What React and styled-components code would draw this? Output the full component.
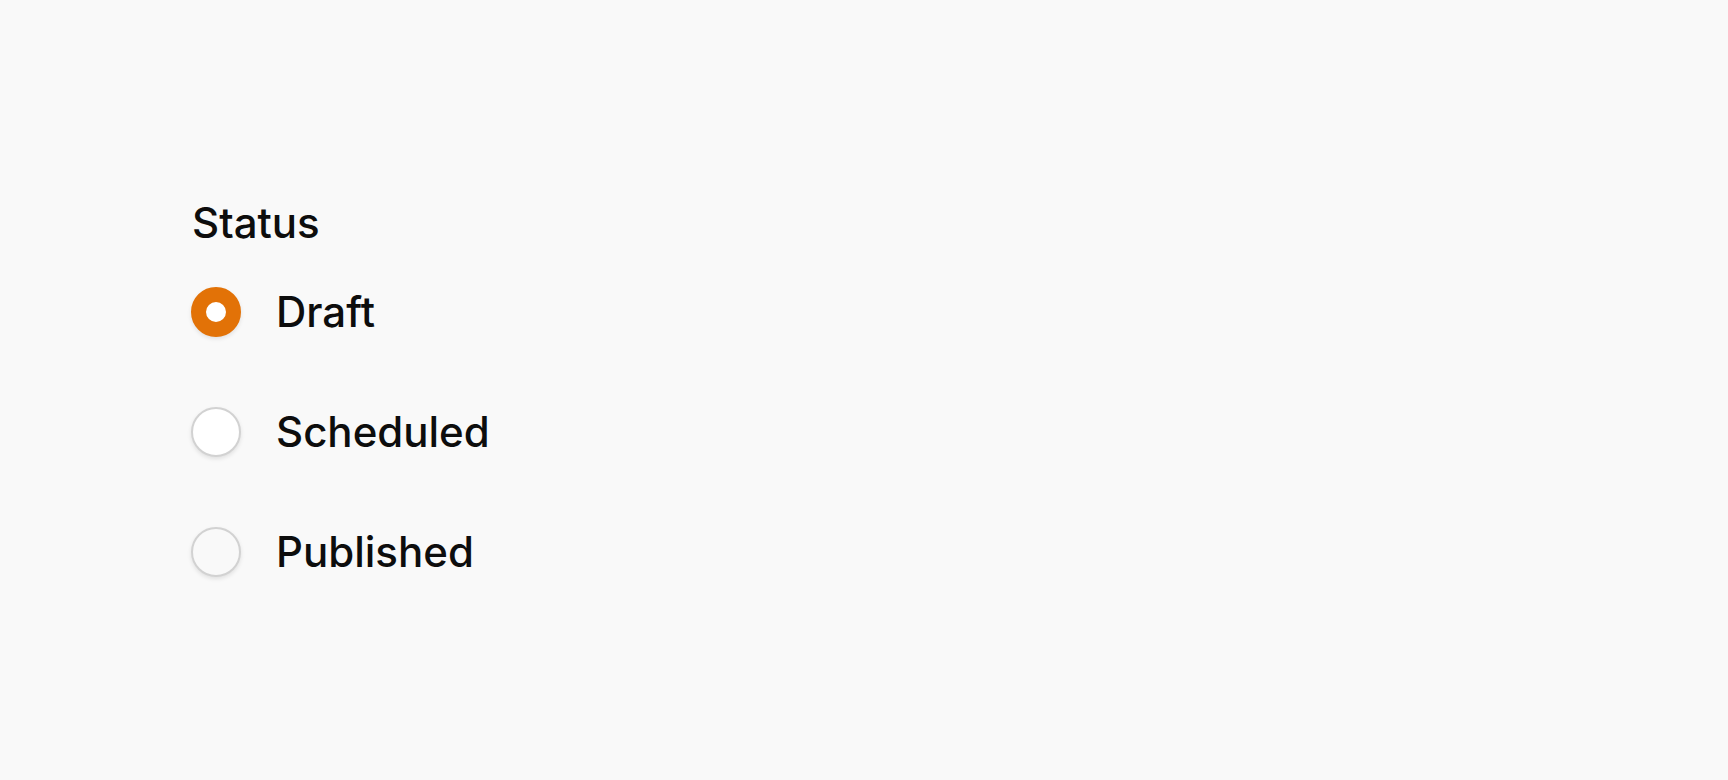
import React, {useState} from "react";
import styled, {createGlobalStyle} from "styled-components";

const OPTIONS = ["Draft", "Scheduled", "Published"];

function App() {
  const [status, setStatus] = useState("Draft");
  const [hovered, setHovered] = useState("Scheduled");

  return (
    <>
      <GlobalStyle/>
      <Page>
        <Group role="radiogroup" aria-label="Status">
          <Legend>Status</Legend>
          <List>
            {OPTIONS.map((option) => (
              <Option
                key={option}
                onClick={() => setStatus(option)}
                onMouseEnter={() => setHovered(option)}>
                <Radio
                  role="radio"
                  aria-checked={status === option}
                  $checked={status === option}
                  $hovered={hovered === option}/>
                <Label>{option}</Label>
              </Option>
            ))}
          </List>
        </Group>
      </Page>
    </>
  );
}

const GlobalStyle = createGlobalStyle`
    html, body {
        margin: 0;
        background: #f9f9f9;
    }
    body {
        font-family: Inter, "Noto Sans", sans-serif;
        color: #0d0d0d;
    }
`;
const Page = styled.div`
    min-height: 780px;
    padding: 197px 0 0 191px;
    box-sizing: border-box;
`;
const Group = styled.div`
    display: flex;
    flex-direction: column;
`;
const Legend = styled.div`
    font-size: 42px;
    line-height: 51px;
    font-weight: 500;
    margin: 0 0 38px 1px;
`;
const List = styled.div`
    display: flex;
    flex-direction: column;
    gap: 69px;
`;
const Option = styled.label`
    display: flex;
    align-items: center;
    gap: 35px;
    height: 51px;
    cursor: pointer;
`;
const Radio = styled.span`
    width: 50px;
    height: 50px;
    border-radius: 50%;
    box-sizing: border-box;
    flex-shrink: 0;
    background: ${p => p.$checked ? "#ffffff" : p.$hovered ? "#ffffff" : "#f9f9f9"};
    border: ${p => p.$checked ? "15px solid #e27207" : "2px solid #d2d2d2"};
    box-shadow: 0 2px 4px rgba(0, 0, 0, 0.1);
`;
const Label = styled.span`
    font-size: 42px;
    line-height: 51px;
    font-weight: 500;
`;

export default App;
